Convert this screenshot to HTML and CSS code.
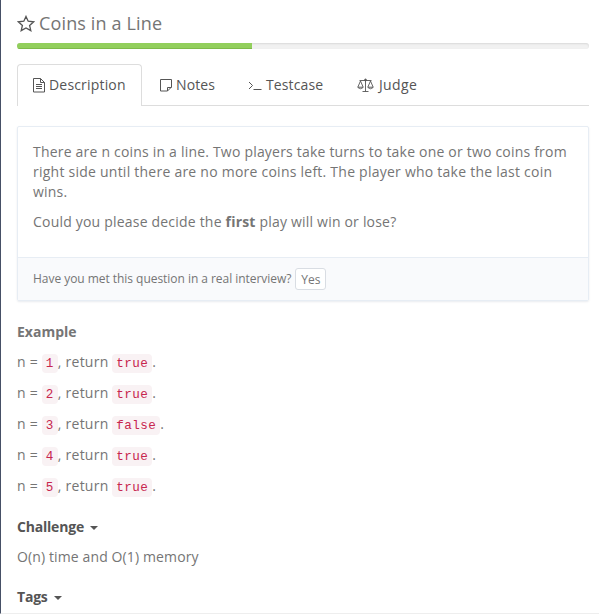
FILE: index.html
```html
<!DOCTYPE html>
<html lang="en">
<head>
<meta charset="utf-8">
<title>Coins in a Line</title>
<link rel="stylesheet" href="styles.css">
</head>
<body>
<main class="page">
  <h1 class="title">
    <svg class="star" width="18" height="17" viewBox="0 0 18 17"><path d="M9 1.4 11.2 6.2 16.6 6.8 12.6 10.4 13.8 15.6 9 12.9 4.2 15.6 5.4 10.4 1.4 6.8 6.8 6.2Z"/></svg>
    <span>Coins in a Line</span>
  </h1>
  <div class="progress"><div class="bar"></div></div>
  <nav class="tabs">
    <a class="tab active"><svg width="12" height="15" viewBox="0 0 12 15"><path d="M.5.5h7l4 4v9.5H.5zM7.5.5v4h4M3 6.5h6M3 8.5h6M3 10.5h6"/></svg><span>Description</span></a>
    <a class="tab notes"><svg width="12" height="15" viewBox="0 0 12 15"><path d="M.5 1.5h11v7.5l-4 4h-7zM7.5 13V9.5h4"/></svg><span>Notes</span></a>
    <a class="tab testcase"><svg width="14" height="15" viewBox="0 0 14 15"><path d="M1 4l3.5 3.5L1 11M5.5 11.5H13.5"/></svg><span>Testcase</span></a>
    <a class="tab judge"><svg class="scales" width="17" height="15" viewBox="0 0 17 15"><path d="M2.5 2.5h12M8.5 1v12.5M5.5 13.5h6M3.5 3 .8 9.2h5.4zM13.5 3l-2.7 6.2h5.4zM.8 9.5q2.7 2.5 5.4 0M10.8 9.5q2.7 2.5 5.4 0"/><circle cx="8.5" cy="2" r="1"/></svg><span>Judge</span></a>
  </nav>
  <section class="panel">
    <div class="panel-body">
      <p>There are n coins in a line. Two players take turns to take one or two coins from<br><span class="wide">right side until there are no more coins left. The player who take the last coin</span><br>wins.</p>
      <p>Could you please decide the <b>first</b> play will win or lose?</p>
    </div>
    <div class="panel-footer"><span>Have you met this question in a real interview?</span><button class="yes">Yes</button></div>
  </section>
  <h2 class="heading example">Example</h2>
  <div class="cases">
    <p>n = <code>1</code>, return <code>true</code>.</p>
    <p>n = <code>2</code>, return <code>true</code>.</p>
    <p>n = <code>3</code>, return <code>false</code>.</p>
    <p>n = <code>4</code>, return <code>true</code>.</p>
    <p>n = <code>5</code>, return <code>true</code>.</p>
  </div>
  <h2 class="heading toggle">Challenge<i class="caret"></i></h2>
  <p class="memory">O(n) time and O(1) memory</p>
  <h2 class="heading toggle">Tags<i class="caret"></i></h2>
</main>
</body>
</html>
```
FILE: styles.css
```css
* { box-sizing: border-box; }
html, body { height: 100%; }
body {
  margin: 0;
  overflow: hidden;
  background: #fff;
  color: #757575;
  font: 14px/20px "Open Sans", "Noto Sans", sans-serif;
}
p, h1, h2 { margin: 0; }
svg { fill: none; stroke: #555; stroke-width: 1; flex: none; }
.page {
  height: 614px;
  padding: 13px 10px 0 16px;
  border-left: 1px solid #465066;
  border-bottom: 1px solid #eee;
}
.title {
  display: flex;
  align-items: center;
  gap: 4px;
  height: 20px;
  font-size: 18px;
  font-weight: 400;
  letter-spacing: .14px;
}
.star { stroke-width: 1.3; }
.progress {
  height: 6px;
  margin-top: 10px;
  overflow: hidden;
  border-radius: 3px;
  background: #f1f1f1;
  box-shadow: inset 0 1px 2px rgba(0, 0, 0, .1);
}
.bar {
  width: 235px;
  height: 6px;
  background: #92cf5c;
  box-shadow: inset 0 -1px 0 #7dba49;
}
.tabs {
  display: flex;
  height: 42px;
  margin-top: 15px;
  border-bottom: 1px solid #ddd;
}
.tab {
  display: flex;
  align-items: center;
  gap: 4px;
  height: 42px;
  padding: 0 16px;
  color: #555;
  letter-spacing: .12px;
  white-space: nowrap;
}
.active {
  width: 125px;
  padding: 0 15px 1px;
  border: 1px solid #ddd;
  border-bottom: 0;
  border-radius: 4px 4px 0 0;
  background: #fff;
  letter-spacing: .18px;
}
.notes { width: 90px; padding-left: 18px; }
.testcase { width: 108px; }
.judge { gap: 5px; padding-left: 17px; letter-spacing: .35px; }
.scales { stroke-width: .9; }
.panel {
  height: 175px;
  margin-top: 20px;
  border: 1px solid #e7edf4;
  border-radius: 2px;
  box-shadow: 0 1px 2px rgba(70, 90, 120, .12);
}
.panel-body {
  height: 130px;
  padding: 15px;
  letter-spacing: .2px;
  white-space: nowrap;
}
.panel-body p { margin-bottom: 10px; }
.wide { letter-spacing: .24px; }
.panel-footer {
  display: flex;
  align-items: center;
  gap: 4px;
  height: 43px;
  padding: 0 15px;
  border-top: 1px solid #e7edf4;
  background: #f9fafc;
  font-size: 12px;
  letter-spacing: -.04px;
}
.yes {
  width: 31px;
  height: 22px;
  padding: 1px 0 0;
  border: 1px solid #d9dde3;
  border-radius: 3px;
  background: #fff;
  color: #757575;
  font: 12px/18px "Open Sans", sans-serif;
}
.heading { font-size: 14px; font-weight: 700; line-height: 20px; }
.example { margin-top: 21px; }
.cases { margin-top: 10px; letter-spacing: .24px; }
.cases p { height: 21px; margin-bottom: 10px; }
code {
  padding: 3px 4px 2px;
  border-radius: 4px;
  background: #f9f2f4;
  color: #c7254e;
  font: 12.6px "Liberation Mono", monospace;
  letter-spacing: .44px;
}
.toggle {
  display: flex;
  align-items: center;
  gap: 6px;
  margin-top: 20px;
  color: #555;
  letter-spacing: -.2px;
}
.caret {
  margin-top: 2px;
  border: 4px solid transparent;
  border-top-color: #555;
  border-bottom: 0;
}
.memory { margin-top: 10px; letter-spacing: .12px; }
```
